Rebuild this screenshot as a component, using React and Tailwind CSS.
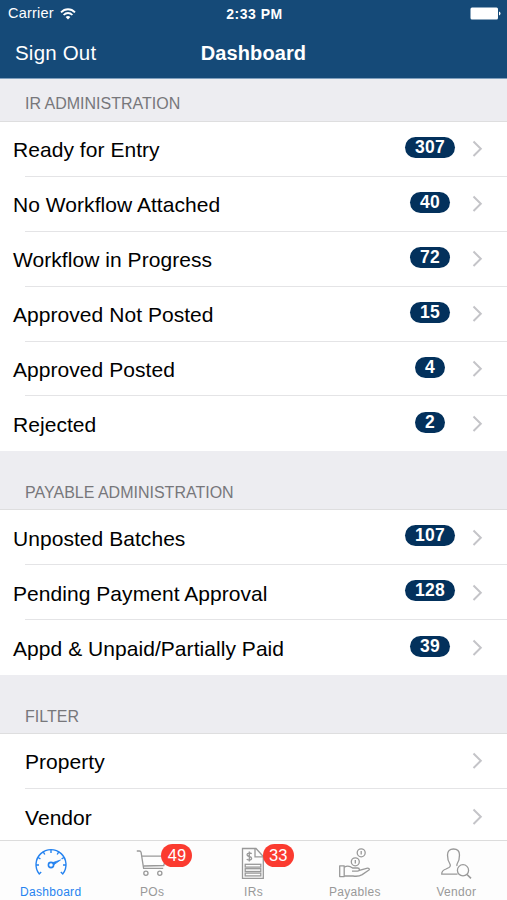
import { useState } from 'react';

const sections = [
  {
    title: 'IR ADMINISTRATION',
    headerClass: 'h-[43px] pb-[8px]',
    rows: [
      { label: 'Ready for Entry', count: 307 },
      { label: 'No Workflow Attached', count: 40 },
      { label: 'Workflow in Progress', count: 72 },
      { label: 'Approved Not Posted', count: 15 },
      { label: 'Approved Posted', count: 4 },
      { label: 'Rejected', count: 2 },
    ],
  },
  {
    title: 'PAYABLE ADMINISTRATION',
    headerClass: 'h-[59px] pb-[7px]',
    rows: [
      { label: 'Unposted Batches', count: 107 },
      { label: 'Pending Payment Approval', count: 128 },
      { label: 'Appd & Unpaid/Partially Paid', count: 39 },
    ],
  },
  {
    title: 'FILTER',
    headerClass: 'h-[59px] pb-[7px]',
    rows: [{ label: 'Property' }, { label: 'Vendor' }],
  },
];

const GaugeIcon = () => (
  <svg width="34" height="34" viewBox="0 0 34 34" fill="none" stroke="currentColor" strokeWidth="1.4">
    <path d="M7.2 25L5.2 26.9A15 15 0 1 1 28.8 26.9L26.8 25" />
    <path d="M2 18h3M32 18h-3M4 10.5l2.4 1.4M9.4 5.1l1.4 2.4M17 2.7v3.2M24.6 5.1l-1.4 2.4M30 10.5l-2.4 1.4" />
    <circle cx="17" cy="18" r="2.6" strokeWidth="1.6" />
    <path d="M18.8 15.6L26.5 13L20 17.6Z" fill="currentColor" strokeWidth="0.8" />
  </svg>
);

const CartIcon = () => (
  <svg width="34" height="34" viewBox="0 0 34 34" fill="none" stroke="currentColor" strokeWidth="1.3">
    <path d="M1.8 4H4.4Q5.8 4 6.1 5.4L8.6 21.4H28.2" />
    <path d="M6.8 9.2H31L28.8 18.5L8.4 19" />
    <circle cx="10.9" cy="26.3" r="2.1" />
    <circle cx="24.8" cy="26.3" r="2.1" />
  </svg>
);

const InvoiceIcon = () => (
  <svg width="34" height="34" viewBox="0 0 34 34" fill="none" stroke="currentColor" strokeWidth="1.3">
    <path d="M6.5 1.5H20L27.3 9.5V31.3H6.5Z" />
    <path d="M19 1.5V9.8H27.3" />
    <path d="M15.6 6.8C14.8 5.6 11 5.6 11 7.8C11 10 15.6 9 15.6 11.3C15.6 13.6 11.5 13.4 10.8 12M13.3 4.6V14.4" />
    <rect x="9.2" y="17.3" width="15.6" height="2.8" />
    <rect x="9.2" y="21.7" width="15.6" height="2.8" />
    <rect x="9.2" y="26.1" width="15.6" height="2.8" />
  </svg>
);

const PayIcon = () => (
  <svg width="34" height="34" viewBox="0 0 34 34" fill="none" stroke="currentColor" strokeWidth="1.3" strokeLinejoin="round">
    <circle cx="23.2" cy="5.8" r="4" />
    <circle cx="17.3" cy="14.8" r="4" />
    <path d="M23.2 4v3.6M17.3 13v3.6" />
    <path d="M1.7 18.8H6.2V29.6H1.7Z" />
    <path d="M6.2 20.3C9.5 18.3 12 19 14.5 21H19.5C22 21 22 24.2 19.5 24.2H14M21.3 23.3L28.6 21.3C30.8 20.9 32.4 22 30.6 23.3L24.2 27.6C21.5 29.3 18 29.5 15 29H6.2" />
  </svg>
);

const VendorIcon = () => (
  <svg width="34" height="34" viewBox="0 0 34 34" fill="none" stroke="currentColor" strokeWidth="1.3" strokeLinejoin="round">
    <path d="M18.5 27.2H2.7C2.7 24 4 23 7 22L10 20.5C11.6 19.6 11.6 18 10.7 16.5C9 14 8.5 11.5 8.5 8C8.5 4.2 10.8 2 14.5 2S20.5 4.2 20.5 8C20.5 11.5 20 14 18.3 16.5Q17.6 17.8 18 19" />
    <circle cx="24" cy="23.3" r="5.6" />
    <path d="M28 27.5L32 31.4" strokeWidth="1.6" />
  </svg>
);

const tabs = [
  { name: 'Dashboard', Icon: GaugeIcon },
  { name: 'POs', Icon: CartIcon, badge: 49 },
  { name: 'IRs', Icon: InvoiceIcon, badge: 33 },
  { name: 'Payables', Icon: PayIcon },
  { name: 'Vendor', Icon: VendorIcon },
];

const Row = ({ label, count, last }) => (
  <li className="flex h-[54.9px] items-stretch">
    <div className={`flex flex-1 items-center ${last ? '' : 'ml-[25px] border-b border-[#e4e4e6]'}`}>
      <span className={`pt-[2px] text-[21px] leading-none tracking-[0.05px] whitespace-nowrap ${count ? (last ? 'ml-[13px]' : '-ml-[12px]') : last ? 'ml-[25px]' : ''}`}>
        {label}
      </span>
      <div className="mr-[24px] ml-auto flex items-center">
        {count && (
          <div className="mr-[16px] flex w-[52px] justify-center">
            <span className="mb-[3px] rounded-full bg-[#03315c] px-[10px] text-[17.5px] leading-[21px] font-bold tracking-[0.2px] text-white">
              {count}
            </span>
          </div>
        )}
        <svg width="11" height="17" viewBox="0 0 11 17" fill="none" stroke="#c4c4c8" strokeWidth="2">
          <path d="M1.5 1.5L8.8 8.8L1.5 16" />
        </svg>
      </div>
    </div>
  </li>
);

export default function App() {
  const [active, setActive] = useState('Dashboard');

  return (
    <div className="flex h-screen w-full flex-col overflow-hidden bg-white font-['Liberation_Sans',Arial,sans-serif] text-black">
      <header className="h-[79px] shrink-0 border-b border-[#7f9fbd] bg-[#154a78] text-white">
        <div className="grid h-[27px] grid-cols-3 items-center pr-[6px] pl-[8px] text-[14px]">
          <div className="flex items-center gap-[6px]">
            <span className="pt-px text-[14.5px] tracking-[0.2px]">Carrier</span>
            <svg width="16" height="12" viewBox="0 0 16 12" fill="none" stroke="currentColor" strokeWidth="1.8">
              <path d="M1 4.4C5 .2 11 .2 15 4.4M3.6 7C6.2 4.3 9.8 4.3 12.4 7" />
              <path d="M5.6 9Q8 7 10.4 9L8 11.6Z" fill="currentColor" stroke="none" />
            </svg>
          </div>
          <span className="pt-px text-center font-bold tracking-[0.5px]">2:33 PM</span>
          <svg className="ml-auto" width="31" height="13" viewBox="0 0 31 13" fill="currentColor">
            <rect x="0.5" y="0.5" width="27.5" height="12" rx="1.5" />
            <path d="M29 4.5Q30.5 5 30.5 6.5T29 8.5Z" />
          </svg>
        </div>
        <div className="grid h-[51px] grid-cols-3 items-center px-[15px]">
          <button className="pt-px text-left text-[20.5px] leading-none tracking-[0.2px]">Sign Out</button>
          <h1 className="text-center text-[20px] leading-none font-bold tracking-[0.1px]">Dashboard</h1>
        </div>
      </header>

      <main className="min-h-0 flex-1 overflow-hidden">
        {sections.map((section) => (
          <section key={section.title}>
            <h2 className={`flex items-end border-b border-[#dededf] bg-[#ededf1] pl-[25px] text-[16px] leading-[18px] text-[#77777b] ${section.headerClass}`}>
              {section.title}
            </h2>
            <ul>
              {section.rows.map((row, i) => (
                <Row key={row.label} {...row} last={i === section.rows.length - 1} />
              ))}
            </ul>
          </section>
        ))}
      </main>

      <nav className="grid h-[60px] shrink-0 grid-cols-5 border-t border-[#dcdcdc] bg-[#fdfdfd]">
        {tabs.map(({ name, Icon, badge }) => (
          <button
            key={name}
            onClick={() => setActive(name)}
            className={`relative flex flex-col items-center pt-[6px] ${active === name ? 'text-[#2583f0]' : 'text-[#999999]'}`}
          >
            <Icon />
            <span className="mt-[4px] text-[12px] leading-[14px] tracking-[0.3px]">{name}</span>
            {badge && (
              <span className="absolute top-[3px] left-[60px] h-[23px] w-[31px] rounded-full bg-[#fb3b30] text-center text-[16.5px] leading-[23px] text-white">
                {badge}
              </span>
            )}
          </button>
        ))}
      </nav>
    </div>
  );
}
